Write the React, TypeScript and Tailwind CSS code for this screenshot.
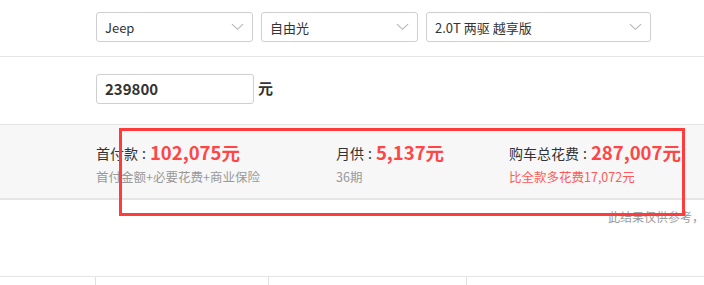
import type { ReactElement } from "react";

const font = { fontFamily: '"Noto Sans CJK SC", "Noto Sans", sans-serif' };

function Chevron(): ReactElement {
  return (
    <svg viewBox="0 0 14 8" width="13" height="8" aria-hidden="true" className="text-[#b5b5b5]">
      <path d="M1 1l6 5.5L13 1" fill="none" stroke="currentColor" strokeWidth="1.2" />
    </svg>
  );
}

function Select({ value, width }: { value: string; width: string }): ReactElement {
  return (
    <div
      className={`flex h-[30px] items-center justify-between rounded-[3px] border border-[#cfcfcf] bg-white pl-[8px] pr-[8px] text-[13px] text-[#333] ${width}`}
    >
      <span className="mt-[1px]">{value}</span>
      <Chevron />
    </div>
  );
}

function Stat({
  label,
  amount,
  note,
  noteRed,
  width
}: {
  label: string;
  amount: string;
  note: string;
  noteRed?: boolean;
  width: string;
}): ReactElement {
  return (
    <div className={`flex flex-col ${width}`}>
      <div className="flex h-[26px] items-center">
        <span className="text-[14px] text-[#333]">{label}</span>
        <span className="ml-[4px] mr-[4px] text-[14px] text-[#333]">:</span>
        <span className="text-[18.5px] font-bold text-[#ff4646]">{amount}</span>
      </div>
      <div className={`mt-[2px] text-[12.5px] ${noteRed ? "text-[#ff5a5a]" : "text-[#999]"}`}>{note}</div>
    </div>
  );
}

export default function App(): ReactElement {
  return (
    <div className="relative h-[285px] w-[704px] overflow-hidden bg-white" style={font}>
      <div className="flex h-[57px] gap-[8px] border-b border-[#e5e5e5] pl-[96px] pt-[12px]">
        <Select value="Jeep" width="w-[157px]" />
        <Select value="自由光" width="w-[157px]" />
        <Select value="2.0T 两驱 越享版" width="w-[225px]" />
      </div>

      <div className="flex h-[67px] items-start pl-[96px] pt-[17px]">
        <div className="flex h-[30px] w-[158px] items-center rounded-[3px] border border-[#cfcfcf] pl-[8px] text-[15px] font-bold text-[#333]">
          239800
        </div>
        <span className="ml-[4px] mt-[3px] text-[15px] font-bold text-[#333]">元</span>
      </div>

      <div className="flex h-[76px] border-t border-b-2 border-[#e5e5e5] bg-[#f7f7f7] pl-[96px] pt-[15px]">
        <Stat label="首付款" amount="102,075元" note="首付金额+必要花费+商业保险" width="w-[240px]" />
        <Stat label="月供" amount="5,137元" note="36期" width="w-[173px]" />
        <Stat
          label="购车总花费"
          amount="287,007元"
          note="比全款多花费17,072元"
          noteRed
          width="w-[190px]"
        />
      </div>

      <div className="flex h-[76px]">
        <span className="ml-[608px] mt-[8px] whitespace-nowrap text-[12px] text-[#999]">此结果仅供参考，</span>
      </div>

      <div className="flex h-[10px] border-t border-[#e5e5e5]">
        <div className="w-[96px] border-r border-[#e0e0e0]" />
        <div className="w-[173px] border-r border-[#e0e0e0]" />
        <div className="w-[198px] border-r border-[#e0e0e0]" />
      </div>

      <div className="absolute left-[119px] top-[128px] h-[88px] w-[566px] border-[3px] border-[#ff3c3c]" />
    </div>
  );
}
